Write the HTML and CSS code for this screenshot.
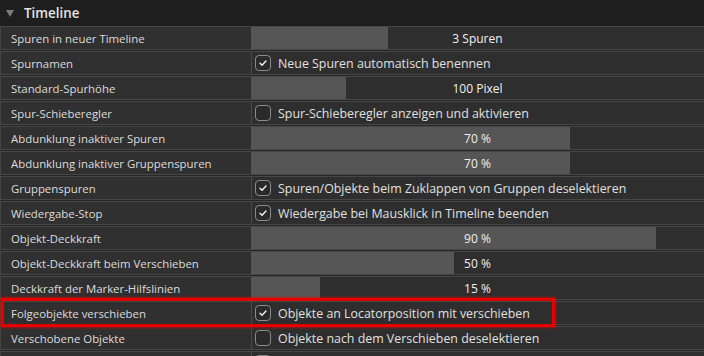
FILE: index.html
```html
<!DOCTYPE html>
<html lang="de">
<head>
<meta charset="utf-8">
<link rel="stylesheet" href="styles.css">
</head>
<body>
<div class="panel">
  <div class="header"><span class="tri"></span><span class="title">Timeline</span></div>
  <div class="rows">
    <div class="row"><div class="label">Spuren in neuer Timeline</div><div class="value slider"><div class="fill" style="width:137px"></div><span class="vtext">3 Spuren</span></div></div>
    <div class="row"><div class="label">Spurnamen</div><div class="value check"><span class="box on"><svg viewBox="0 0 16 16"><path d="M4.6 8.2l2.3 2.3 4.5-4.8"/></svg></span><span class="ctext">Neue Spuren automatisch benennen</span></div></div>
    <div class="row"><div class="label">Standard-Spurhöhe</div><div class="value slider"><div class="fill" style="width:95px"></div><span class="vtext">100 Pixel</span></div></div>
    <div class="row"><div class="label">Spur-Schieberegler</div><div class="value check"><span class="box"></span><span class="ctext">Spur-Schieberegler anzeigen und aktivieren</span></div></div>
    <div class="row"><div class="label">Abdunklung inaktiver Spuren</div><div class="value slider"><div class="fill" style="width:319px"></div><span class="vtext">70 %</span></div></div>
    <div class="row"><div class="label">Abdunklung inaktiver Gruppenspuren</div><div class="value slider"><div class="fill" style="width:319px"></div><span class="vtext">70 %</span></div></div>
    <div class="row"><div class="label">Gruppenspuren</div><div class="value check"><span class="box on"><svg viewBox="0 0 16 16"><path d="M4.6 8.2l2.3 2.3 4.5-4.8"/></svg></span><span class="ctext">Spuren/Objekte beim Zuklappen von Gruppen deselektieren</span></div></div>
    <div class="row"><div class="label">Wiedergabe-Stop</div><div class="value check"><span class="box on"><svg viewBox="0 0 16 16"><path d="M4.6 8.2l2.3 2.3 4.5-4.8"/></svg></span><span class="ctext">Wiedergabe bei Mausklick in Timeline beenden</span></div></div>
    <div class="row"><div class="label">Objekt-Deckkraft</div><div class="value slider"><div class="fill" style="width:405px"></div><span class="vtext">90 %</span></div></div>
    <div class="row"><div class="label">Objekt-Deckkraft beim Verschieben</div><div class="value slider"><div class="fill" style="width:203px"></div><span class="vtext">50 %</span></div></div>
    <div class="row"><div class="label">Deckkraft der Marker-Hilfslinien</div><div class="value slider"><div class="fill" style="width:69px"></div><span class="vtext">15 %</span></div></div>
    <div class="row"><div class="label">Folgeobjekte verschieben</div><div class="value check"><span class="box on"><svg viewBox="0 0 16 16"><path d="M4.6 8.2l2.3 2.3 4.5-4.8"/></svg></span><span class="ctext">Objekte an Locatorposition mit verschieben</span></div></div>
    <div class="row"><div class="label">Verschobene Objekte</div><div class="value check"><span class="box"></span><span class="ctext">Objekte nach dem Verschieben deselektieren</span></div></div>
    <div class="row"><div class="label"></div><div class="value check"><span class="box"></span><span class="ctext"></span></div></div>
    <div class="highlight"></div>
  </div>
</div>
</body>
</html>
```

FILE: styles.css
```css
html, body {
  margin: 0;
  padding: 0;
  background: #262626;
  width: 704px;
  height: 356px;
  overflow: hidden;
}
.panel {
  font-family: "Open Sans", "Noto Sans", sans-serif;
  font-size: 12px;
  color: #dcdcdc;
  height: 356px;
  overflow: hidden;
}
.header {
  height: 26px;
  background: #1e1e1e;
  display: flex;
  align-items: center;
  padding-left: 6px;
  box-sizing: border-box;
}
.tri {
  width: 0;
  height: 0;
  border-left: 4px solid transparent;
  border-right: 4px solid transparent;
  border-top: 7px solid #7a7a7a;
  margin-right: 10px;
  margin-top: 1px;
}
.title {
  font-size: 13.4px;
  font-weight: 600;
  color: #e4e4e4;
}
.rows {
  position: relative;
}
.row {
  display: grid;
  grid-template-columns: 251px 1fr;
  height: 24px;
  margin-bottom: 1px;
  border-top: 1px solid #474747;
  border-bottom: 1px solid #474747;
  box-sizing: border-box;
  background: #303030;
}
.label {
  border-left: 1px solid #454545;
  padding-left: 10px;
  display: flex;
  align-items: center;
  white-space: nowrap;
  background: #303030;
  font-size: 11.4px;
}
.value {
  position: relative;
  display: flex;
  align-items: center;
  background: #2e2e2e;
  min-width: 0;
}
.slider {
  justify-content: center;
}
.fill {
  position: absolute;
  left: 0;
  top: 0;
  bottom: 0;
  background: #565656;
}
.vtext {
  position: relative;
  color: #f0f0f0;
}
.check {
  box-shadow: inset 1px 0 0 #4a4a4a;
  padding-left: 4px;
}
.box {
  width: 16px;
  height: 16px;
  box-sizing: border-box;
  border: 1px solid #8a8a8a;
  border-radius: 4px;
  background: #2a2a2a;
  margin-right: 7px;
  flex: none;
  display: flex;
}
.box svg {
  width: 14px;
  height: 14px;
  fill: none;
  stroke: #f2f2f2;
  stroke-width: 1.6;
  stroke-linecap: round;
  stroke-linejoin: round;
}
.ctext {
  white-space: nowrap;
  color: #e0e0e0;
  font-size: 12.4px;
}
.highlight {
  position: absolute;
  left: 1px;
  top: 272px;
  width: 554px;
  height: 29px;
  box-sizing: border-box;
  border: 3px solid #e40000;
  box-shadow: 0 0 2px 1px rgba(255, 0, 0, 0.55);
  pointer-events: none;
}
```
